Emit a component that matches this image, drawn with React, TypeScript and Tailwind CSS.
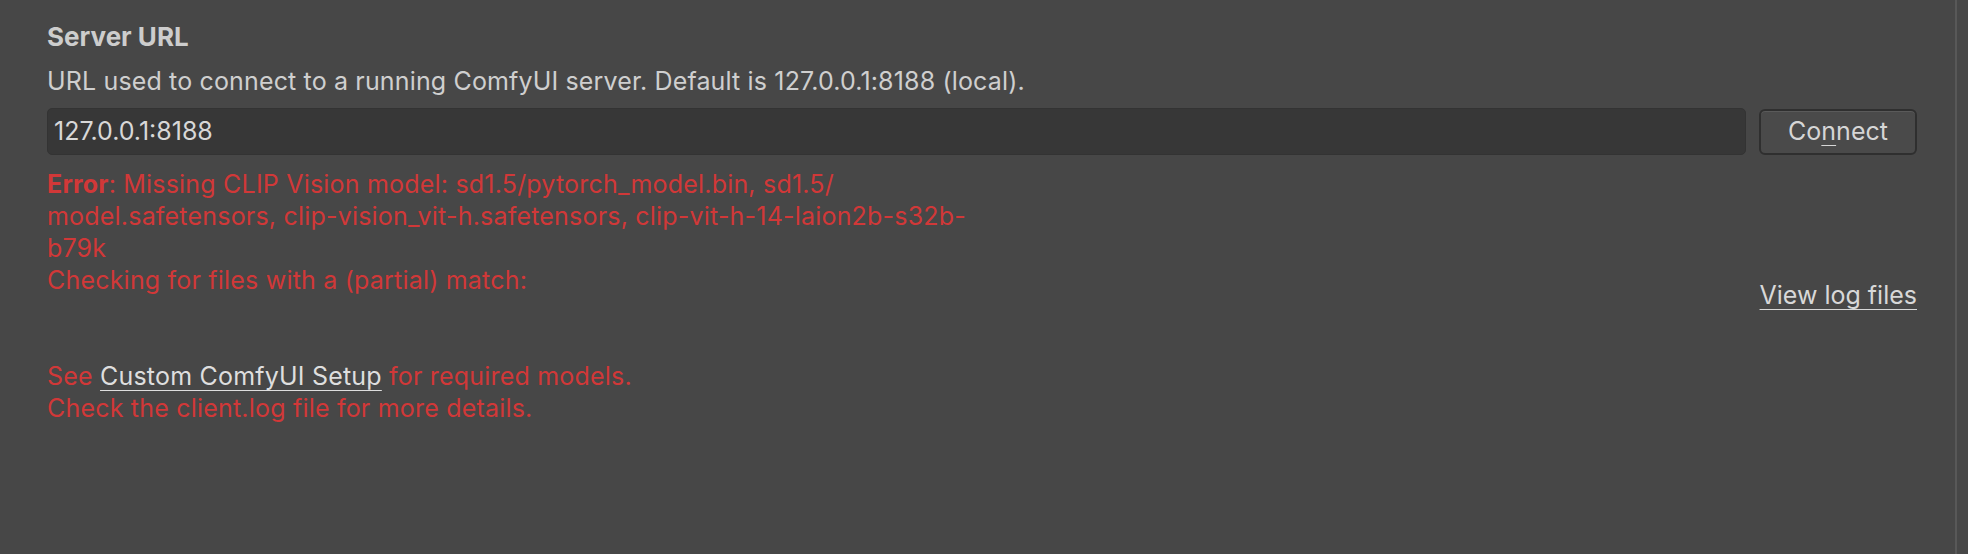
import React from "react";

export default function App() {
  return (
    <div
      className="w-[1968px] h-[554px] bg-[#474747] flex overflow-hidden"
      style={{ fontFamily: "Inter, 'Noto Sans', sans-serif" }}
    >
      <div className="flex-1 pl-[47px] pr-[38px] pt-[21px] flex flex-col">
        <div className="text-[26px] leading-[32px] font-bold text-[#cdcdcd]">Server URL</div>
        <div className="mt-[12px] text-[25px] leading-[32px] tracking-[0.15px] text-[#cfcfcf] whitespace-nowrap">
          URL used to connect to a running ComfyUI server. Default is 127.0.0.1:8188 (local).
        </div>
        <div className="mt-[11px] flex items-center gap-[13px]">
          <div className="flex-1 h-[47px] rounded-[5px] bg-[#373737] border border-[#333333] flex items-center pl-[6px] text-[25px] text-[#d8d8d8]">
            127.0.0.1:8188
          </div>
          <button className="w-[158px] h-[46px] rounded-[6px] bg-[#4a4a4a] border-2 border-[#2f2f2f] shadow-[inset_0_1px_0_#5a5a5a] text-[25px] text-[#d6d6d6] flex items-center justify-center">
            <span>
              Co<span className="underline underline-offset-[5px] decoration-1">n</span>nect
            </span>
          </button>
        </div>
        <div className="mt-[13px] flex items-center">
          <div className="w-[950px] text-[25px] leading-[32px] tracking-[0.2px] text-[#d13838] whitespace-nowrap">
            <div>
              <span className="font-bold">Error</span>: Missing CLIP Vision model: sd1.5/pytorch_model.bin, sd1.5/
            </div>
            <div>model.safetensors, clip-vision_vit-h.safetensors, clip-vit-h-14-laion2b-s32b-</div>
            <div>b79k</div>
            <div>Checking for files with a (partial) match:</div>
            <div className="h-[64px]" />
            <div>
              See{" "}
              <span className="text-[#dedede] underline underline-offset-[5px] decoration-1">Custom ComfyUI Setup</span>{" "}
              for required models.
            </div>
            <div>Check the client.log file for more details.</div>
          </div>
          <div className="flex-1 flex justify-end">
            <span className="text-[25px] text-[#d8d8d8] underline underline-offset-[5px] decoration-1">View log files</span>
          </div>
        </div>
      </div>
      <div className="w-[2px] bg-[#585858]" />
      <div className="w-[11px]" />
    </div>
  );
}
